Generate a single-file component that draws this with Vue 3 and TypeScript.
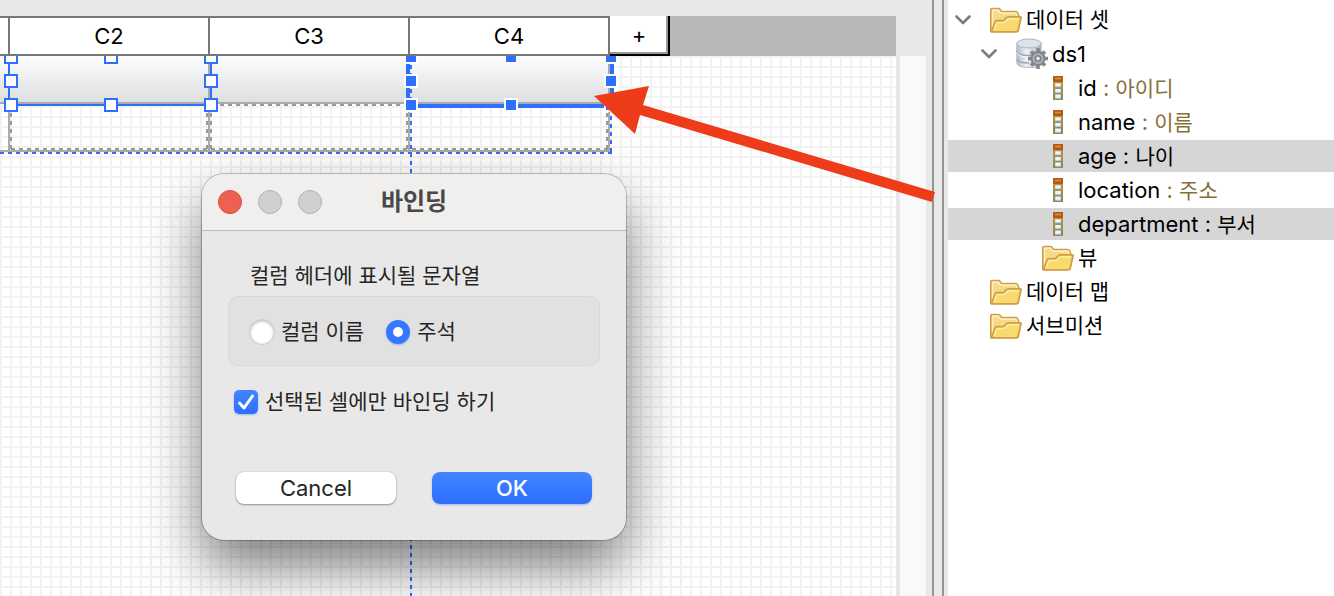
<script setup lang="ts">
import { ref } from 'vue'

interface TreeNode {
  label: string
  note?: string
  icon: 'folder' | 'dataset' | 'column'
  level: number
  expandable?: boolean
  selected?: boolean
}

interface Point { x: number; y: number }

const columns: string[] = ['C2', 'C3', 'C4']

const nodes: TreeNode[] = [
  { label: '데이터 셋', icon: 'folder', level: 0, expandable: true },
  { label: 'ds1', icon: 'dataset', level: 1, expandable: true },
  { label: 'id', note: '아이디', icon: 'column', level: 2 },
  { label: 'name', note: '이름', icon: 'column', level: 2 },
  { label: 'age', note: '나이', icon: 'column', level: 2, selected: true },
  { label: 'location', note: '주소', icon: 'column', level: 2 },
  { label: 'department', note: '부서', icon: 'column', level: 2, selected: true },
  { label: '뷰', icon: 'folder', level: 2 },
  { label: '데이터 맵', icon: 'folder', level: 0 },
  { label: '서브미션', icon: 'folder', level: 0 },
]

/* The eight resize handles around a rectangle, by their centres. */
function handles(left: number, right: number, top: number, bottom: number): Point[] {
  const cx = (left + right) / 2
  const cy = (top + bottom) / 2
  return [
    { x: left, y: top }, { x: cx, y: top }, { x: right, y: top },
    { x: left, y: cy }, { x: right, y: cy },
    { x: left, y: bottom }, { x: cx, y: bottom }, { x: right, y: bottom },
  ]
}

const openHandles = handles(11, 211, 1, 49)
const solidHandles = handles(411, 611, 1, 49)

const headerText = ref<string>('comment')
const selectedOnly = ref<boolean>(true)
</script>

<template>
  <div class="app">
    <main class="editor">
      <div class="sheet">
        <div class="columns">
          <div class="stub"></div>
          <div v-for="c in columns" :key="c" class="column">{{ c }}</div>
          <button type="button" class="add">+</button>
        </div>
        <div class="canvas">
          <div class="cells head">
            <div class="stub"></div>
            <div v-for="c in columns" :key="c" class="cell"></div>
          </div>
          <div class="cells body">
            <div class="stub"></div>
            <div v-for="c in columns" :key="c" class="cell"></div>
          </div>
          <svg class="marks" aria-hidden="true">
            <g fill="none" stroke="#999" stroke-width="2" stroke-dasharray="4 4">
              <path d="M11 57V93M207 57V93M211 57V93M407 57V93M607 57V93" />
              <path d="M11 93H208M211 93H408M412 93H608M212 49H408" />
            </g>
            <g fill="none" stroke="#2f6fff" stroke-width="2" stroke-dasharray="4 4">
              <path d="M0 97H612M611 52V98" />
              <path d="M411 1V1200" />
            </g>
            <path d="M9 0V49H211V0" fill="none" stroke="#2f6fff" stroke-width="2" />
            <path d="M408 0V50H612V0" fill="none" stroke="#2f6fff" stroke-width="4" />
            <rect v-for="(h, i) in openHandles" :key="'o' + i" :x="h.x - 6" :y="h.y - 6" width="12" height="12" fill="#fff" stroke="#2f6fff" stroke-width="2" />
            <rect v-for="(h, i) in solidHandles" :key="'s' + i" :x="h.x - 6" :y="h.y - 6" width="12" height="12" fill="#2f6fff" stroke="#fff" stroke-width="2" />
          </svg>
        </div>
      </div>
      <div class="gutter"><div class="track"></div></div>
    </main>
    <div class="sash"></div>

    <aside class="side">
      <ul class="tree" role="tree">
        <li
          v-for="n in nodes"
          :key="n.label"
          role="treeitem"
          class="node"
          :class="['level-' + n.level, { selected: n.selected }]"
          :aria-level="n.level + 1"
          :aria-selected="!!n.selected"
        >
          <span class="twist">
            <svg v-if="n.expandable" width="16" height="10" viewBox="0 0 16 10"><path d="M1.5 1.5L8 8L14.5 1.5" fill="none" stroke="#7d7d7d" stroke-width="2.6" stroke-linecap="round" stroke-linejoin="round" /></svg>
          </span>
          <span class="icon">
            <svg v-if="n.icon === 'folder'" width="32" height="26" viewBox="0 0 32 26">
              <path d="M.8 24.5V2.5Q.8 1.5 2 1.5H8.5Q10 1.5 10.5 3Q11 4.5 13 4.5H26Q27.5 4.5 28 6.5L29 9.5L30 10.5L28 24.5Z" fill="#f7d987" stroke="#cf9d4c" stroke-width="1.6" stroke-linejoin="round" />
              <path d="M2.6 20V3.2H8.5Q9.5 6.2 12.5 6.2H26L27 9" fill="none" stroke="#fdf0bd" stroke-width="1.4" />
              <path d="M1.5 24.8L5 15Q5.5 13.6 7 13.6H12.5Q14 13.6 15 12.2L16 11Q17 9.8 18.5 9.8H30.3Q31.3 9.8 31 11L28.2 23Q27.8 24.8 26 24.8Z" fill="#f9da6e" stroke="#d19f4a" stroke-width="1.8" stroke-linejoin="round" />
              <path d="M4 22.5L6.8 15.6H13Q15 15.6 16.5 13.4Q17.5 11.8 19 11.8H28.8" fill="none" stroke="#fdeea6" stroke-width="1.4" />
            </svg>
            <svg v-else-if="n.icon === 'dataset'" width="32" height="32" viewBox="0 0 32 32">
              <defs>
                <linearGradient id="drum" x1="0" x2="1" y1="0" y2="0">
                  <stop offset="0" stop-color="#b3bdc9" />
                  <stop offset=".4" stop-color="#eef2f7" />
                  <stop offset="1" stop-color="#a9b4c1" />
                </linearGradient>
              </defs>
              <path d="M.8 5V25Q1 29.5 13 29.5Q25 29.5 25.2 25V5Z" fill="url(#drum)" stroke="#b3bdc8" />
              <ellipse cx="13" cy="5.5" rx="12.2" ry="4.5" fill="#dce3ea" stroke="#a9b5c1" />
              <path d="M1 13Q2 17.5 13 17.5Q24 17.5 25 13M1 21Q2 25 13 25" fill="none" stroke="#97a4b4" stroke-width="1.3" />
              <path d="M1 14.5Q2 19 13 19Q20 19 24 16.5" fill="none" stroke="#f8fafc" />
              <g stroke="#85888c" stroke-width="3.6">
                <path d="M22 10V31M12 20.500H32M15 13.500L29 27.500M15 27.500L29 13.500" />
              </g>
              <circle cx="22" cy="20.500" r="6.500" fill="#acaeb2" stroke="#808488" stroke-width="2" />
              <circle cx="22" cy="20.500" r="2.600" fill="#e4eaf0" stroke="#74787c" stroke-width="1.400" />
            </svg>
            <svg v-else width="10" height="26" viewBox="0 0 10 26">
              <defs>
                <linearGradient id="strip" x1="0" x2="0" y1="0" y2="1">
                  <stop offset="0" stop-color="#c39a45" />
                  <stop offset="1" stop-color="#8c8561" />
                </linearGradient>
              </defs>
              <rect y="1" width="10" height="24" rx=".6" fill="url(#strip)" />
              <rect y="1" width="10" height="6" rx=".6" fill="#b35a12" />
              <path d="M2 3.500H8" stroke="#e08f35" stroke-width="1.600" />
              <path d="M2.200 10H7.800M2.200 15.700H7.800M2.200 21.400H7.800" stroke="#edf7fc" stroke-width="3.600" />
              <path d="M2.200 11.700H7.800M2.200 17.400H7.800M2.200 23.100H7.800" stroke="#b5cfdc" />
            </svg>
          </span>
          <span class="label" :class="{ latin: n.icon !== 'folder' }">{{ n.label }}<span v-if="n.note" class="note"> : <span class="ko">{{ n.note }}</span></span></span>
        </li>
      </ul>
    </aside>

    <svg class="pointer" aria-hidden="true">
      <path d="M594 96L649 86L643 105L935 192L932 202L640 115L635 134Z" fill="#ee3b19" />
    </svg>

    <form class="dialog" role="dialog" aria-labelledby="dialog-title" @submit.prevent>
      <header class="titlebar">
        <div class="lights">
          <button type="button" class="light close" aria-label="Close"></button>
          <button type="button" class="light" aria-label="Minimize" disabled></button>
          <button type="button" class="light" aria-label="Zoom" disabled></button>
        </div>
        <h1 id="dialog-title">바인딩</h1>
      </header>
      <div class="content">
        <fieldset class="group">
          <legend>컬럼 헤더에 표시될 문자열</legend>
          <div class="box">
            <label><input v-model="headerText" type="radio" name="header" value="name" />컬럼 이름</label>
            <label><input v-model="headerText" type="radio" name="header" value="comment" />주석</label>
          </div>
        </fieldset>
        <label class="only">
          <span class="tick">
            <input v-model="selectedOnly" type="checkbox" />
            <svg v-if="selectedOnly" width="24" height="24" viewBox="0 0 24 24"><path d="M5.5 13L10 18L18.5 6" fill="none" stroke="#fff" stroke-width="3" stroke-linecap="round" stroke-linejoin="round" /></svg>
          </span>
          선택된 셀에만 바인딩 하기
        </label>
        <div class="actions">
          <button type="button" class="btn">Cancel</button>
          <button type="submit" class="btn primary">OK</button>
        </div>
      </div>
    </form>
  </div>
</template>

<style>
body {
  background: #e8e8e8;
}
</style>

<style scoped>
.app {
  position: relative;
  display: flex;
  min-height: 100vh;
  overflow: hidden;
  color: #000;
  font-family: Inter, "Noto Sans CJK KR", sans-serif;
  font-size: 21px;
}
.app * {
  box-sizing: border-box;
}
.editor {
  flex: 1;
  display: flex;
  min-width: 0;
  padding-top: 16px;
}
.sheet {
  flex: 1;
  display: flex;
  flex-direction: column;
  min-width: 0;
}
.columns {
  display: flex;
  height: 40px;
  background: #b8b8b8;
}
.stub {
  width: 10px;
  flex: none;
}
.column {
  width: 200px;
  line-height: 36px;
  text-align: center;
  font-size: 22px;
}
.columns .stub,
.column {
  background: #fff;
  border: solid #777;
  border-width: 2px 2px 2px 0;
}
.add {
  width: 60px;
  padding: 0;
  border: solid #000;
  border-width: 0 2px 2px 0;
  background: #fff;
  box-shadow: inset -2px -2px #999;
  font: inherit;
  font-size: 22px;
  color: #000;
}
.canvas {
  position: relative;
  flex: 1;
  overflow: hidden;
  background-color: #fff;
  background-image:
    linear-gradient(90deg, #f2f2f2 2px, transparent 2px),
    linear-gradient(#f2f2f2 2px, transparent 2px);
  background-size: 10px 10px;
}
.cells {
  display: flex;
  width: max-content;
  height: 48px;
}
.cells .cell {
  width: 200px;
}
.cells > div {
  border: solid #ababab;
  border-width: 0 2px 2px 0;
}
.head {
  background: linear-gradient(#fbfdff, #dcddde);
}
.marks {
  position: absolute;
  left: 0;
  top: 0;
  width: 100%;
  height: 100%;
}
.gutter {
  width: 36px;
  padding: 40px 6px 0 0;
}
.track {
  height: 100%;
  background: #f9f9f9;
  border-left: 4px solid #e6e6e6;
}
.sash {
  width: 12px;
  margin-right: 4px;
  border: solid #949494;
  border-width: 0 2px;
}
.side {
  width: 386px;
  background: #fff;
}
.tree {
  display: flex;
  flex-direction: column;
  gap: 2px;
  margin: 0;
  padding: 4px 0;
  list-style: none;
}
.node {
  display: flex;
  align-items: center;
  height: 32px;
  padding-left: 7px;
  white-space: pre;
}
.level-1 {
  padding-left: 33px;
}
.level-2 {
  padding-left: 59px;
}
.selected {
  background: #d6d6d6;
}
.twist {
  display: flex;
  width: 16px;
  margin-right: 19px;
}
.icon {
  display: flex;
  justify-content: center;
  width: 32px;
  margin-right: 4px;
}
.label {
  line-height: 32px;
}
.latin {
  font-size: 22px;
}
.ko {
  font-size: 21px;
}
.note {
  color: #857039;
}
.selected .note {
  color: #000;
}
.pointer {
  position: absolute;
  left: 0;
  top: 0;
  width: 100%;
  height: 100%;
  pointer-events: none;
}
.dialog {
  position: absolute;
  left: 202px;
  top: 174px;
  width: 424px;
  border-radius: 22px;
  background: #e8e8e8;
  color: #252525;
  box-shadow: 0 0 0 1px rgba(0, 0, 0, .22), 0 26px 56px rgba(0, 0, 0, .52);
}
.titlebar {
  display: grid;
  grid-template-columns: 1fr auto 1fr;
  align-items: center;
  height: 57px;
  padding: 0 16px;
  border-bottom: 1px solid #bfbfbf;
  border-radius: 22px 22px 0 0;
  background: #f0efed;
}
.lights {
  display: flex;
  gap: 16px;
}
.light {
  width: 24px;
  height: 24px;
  padding: 0;
  border: 1px solid #b2b1af;
  border-radius: 50%;
  background: #d1d0ce;
}
.close {
  border-color: #d64e40;
  background: #ee6152;
}
h1 {
  margin: 0;
  color: #484848;
  font-size: 24px;
  font-weight: 700;
  line-height: 32px;
}
.content {
  padding: 29px 26px 36px;
}
.group {
  min-width: 0;
  margin: 0;
  padding: 0;
  border: 0;
}
legend {
  padding: 0 0 4px 22px;
  line-height: 32px;
}
.box {
  display: flex;
  align-items: center;
  gap: 22px;
  height: 70px;
  padding: 2px 21px 0;
  border: 1px solid #d7d7d7;
  border-radius: 10px;
  background: #e1e1e1;
}
label {
  display: flex;
  align-items: center;
  gap: 7px;
  line-height: 32px;
}
input {
  appearance: none;
  width: 24px;
  height: 24px;
  margin: 0;
  background: #fff;
  box-shadow: inset 0 1px 3px rgba(0, 0, 0, .3), 0 0 0 1px rgba(0, 0, 0, .08);
}
input[type="radio"] {
  border-radius: 50%;
}
input[type="radio"]:checked {
  border: 7px solid #3478ff;
  box-shadow: 0 1px 2px rgba(47, 111, 255, .4);
}
input[type="checkbox"] {
  display: block;
  border-radius: 5px;
}
input[type="checkbox"]:checked {
  background: linear-gradient(#4186ff, #2f6dff);
  box-shadow: 0 1px 2px rgba(47, 111, 255, .4);
}
.only {
  margin: 20px 0 0 6px;
}
.tick {
  position: relative;
}
.tick svg {
  position: absolute;
  left: 0;
  top: 0;
  pointer-events: none;
}
.actions {
  display: grid;
  grid-template-columns: 1fr 1fr;
  gap: 36px;
  margin: 54px 8px 0;
}
.btn {
  height: 32px;
  padding: 0;
  border: 0;
  border-radius: 8px;
  background: #fff;
  box-shadow: 0 1px 2px rgba(0, 0, 0, .35), 0 0 1px rgba(0, 0, 0, .3);
  color: #252525;
  font: inherit;
  font-size: 22px;
  line-height: 32px;
}
.primary {
  background: linear-gradient(#4186ff, #2f6dff);
  box-shadow: 0 1px 2px rgba(47, 111, 255, .4);
  color: #fff;
  font-weight: 500;
}
</style>
